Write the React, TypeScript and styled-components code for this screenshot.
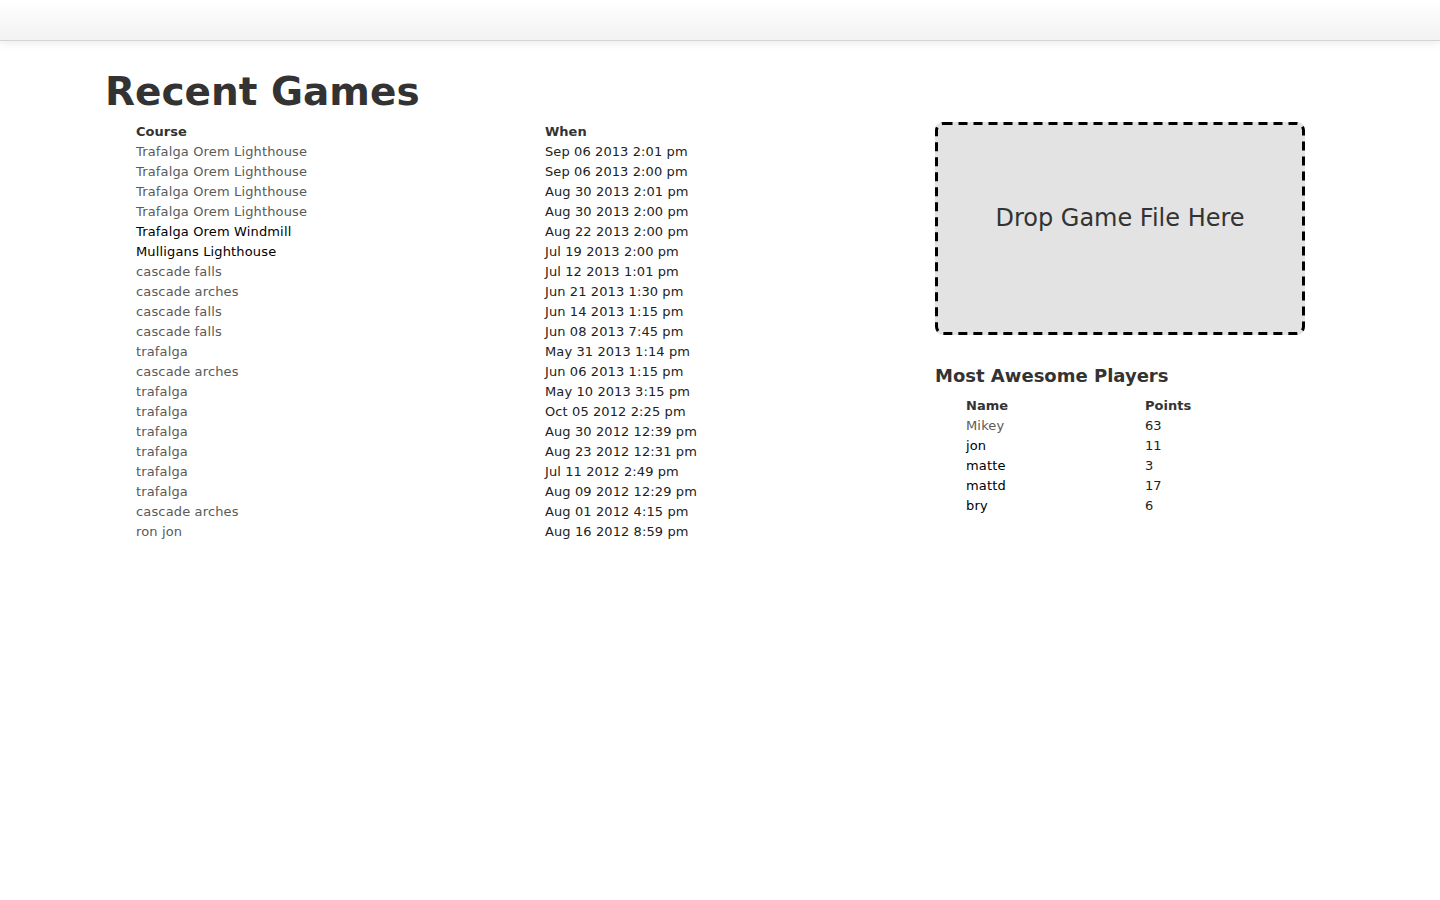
import { ReactElement } from 'react';
import styled, { createGlobalStyle } from 'styled-components';

const GlobalStyle = createGlobalStyle`
  html, body {
    margin: 0;
    padding: 0;
    background: #fff;
  }
  body {
    font-family: "DejaVu Sans", Verdana, sans-serif;
    font-size: 13px;
    line-height: 20px;
    color: #333;
  }
`;

const NavBar = styled.div`
  height: 40px;
  background: linear-gradient(to bottom, #ffffff, #f2f2f2);
  border-bottom: 1px solid #d4d4d4;
  box-shadow: 0 1px 10px rgba(0, 0, 0, 0.1);
`;

const Page = styled.div`
  width: 1170px;
  margin: 0 auto;
`;

const Title = styled.h1`
  margin: 29px 0 8px -30px;
  font-size: 39px;
  line-height: 44px;
  font-weight: bold;
  color: #333;
`;

const Row = styled.div`
  display: grid;
  grid-template-columns: 770px 370px;
  column-gap: 30px;
  align-items: start;
`;

const Table = styled.table<{ $width: number; $indent?: number }>`
  border-collapse: collapse;
  border-spacing: 0;
  width: ${p => p.$width}px;
  margin-left: ${p => p.$indent || 0}px;
`;

const Head = styled.th<{ $width?: string }>`
  text-align: left;
  font-weight: bold;
  color: #333;
  padding: 0 0 0 1px;
  line-height: 20px;
  width: ${p => p.$width || 'auto'};
`;

const Cell = styled.td`
  padding: 0 0 0 1px;
  line-height: 20px;
  color: #222;
  letter-spacing: 0.1px;
`;

const Link = styled.a<{ $seen?: boolean }>`
  color: ${p => (p.$seen ? '#5a5a5a' : '#000')};
  text-decoration: none;
  letter-spacing: 0.15px;
`;

const DropZone = styled.div`
  position: relative;
  box-sizing: border-box;
  height: 213px;
  border-radius: 8px;
  background: #e3e3e3;
  display: flex;
  justify-content: center;
  padding-top: 81px;
  font-size: 24px;
  line-height: 30px;
  color: #333;
`;

const DashedEdge = styled.svg`
  position: absolute;
  inset: 0;
  width: 100%;
  height: 100%;
  pointer-events: none;
`;

const SubTitle = styled.h3`
  margin: 29px 0 8px;
  font-size: 18px;
  line-height: 24px;
  font-weight: bold;
  color: #333;
`;

const games = [
  ['Trafalga Orem Lighthouse', 'Sep 06 2013 2:01 pm', true],
  ['Trafalga Orem Lighthouse', 'Sep 06 2013 2:00 pm', true],
  ['Trafalga Orem Lighthouse', 'Aug 30 2013 2:01 pm', true],
  ['Trafalga Orem Lighthouse', 'Aug 30 2013 2:00 pm', true],
  ['Trafalga Orem Windmill', 'Aug 22 2013 2:00 pm', false],
  ['Mulligans Lighthouse', 'Jul 19 2013 2:00 pm', false],
  ['cascade falls', 'Jul 12 2013 1:01 pm', true],
  ['cascade arches', 'Jun 21 2013 1:30 pm', true],
  ['cascade falls', 'Jun 14 2013 1:15 pm', true],
  ['cascade falls', 'Jun 08 2013 7:45 pm', true],
  ['trafalga', 'May 31 2013 1:14 pm', true],
  ['cascade arches', 'Jun 06 2013 1:15 pm', true],
  ['trafalga', 'May 10 2013 3:15 pm', true],
  ['trafalga', 'Oct 05 2012 2:25 pm', true],
  ['trafalga', 'Aug 30 2012 12:39 pm', true],
  ['trafalga', 'Aug 23 2012 12:31 pm', true],
  ['trafalga', 'Jul 11 2012 2:49 pm', true],
  ['trafalga', 'Aug 09 2012 12:29 pm', true],
  ['cascade arches', 'Aug 01 2012 4:15 pm', true],
  ['ron jon', 'Aug 16 2012 8:59 pm', true],
] as const;

const players = [
  ['Mikey', '63', true],
  ['jon', '11', false],
  ['matte', '3', false],
  ['mattd', '17', false],
  ['bry', '6', false],
] as const;

function App(): ReactElement {
  return (
    <>
      <GlobalStyle />
      <NavBar />
      <Page>
        <Title>Recent Games</Title>
        <Row>
          <Table $width={770}>
            <thead>
              <tr>
                <Head $width="408px">Course</Head>
                <Head>When</Head>
              </tr>
            </thead>
            <tbody>
              {games.map(([course, when, seen], i) => (
                <tr key={i}>
                  <Cell>
                    <Link href="#" $seen={seen}>{course}</Link>
                  </Cell>
                  <Cell>{when}</Cell>
                </tr>
              ))}
            </tbody>
          </Table>
          <div>
            <DropZone>
              <DashedEdge>
                <rect
                  x="1.5"
                  y="1.5"
                  width="367"
                  height="210"
                  rx="7"
                  fill="none"
                  stroke="#000"
                  strokeWidth="3"
                  strokeDasharray="9 6"
                />
              </DashedEdge>
              Drop Game File Here
            </DropZone>
            <SubTitle>Most Awesome Players</SubTitle>
            <Table $width={340} $indent={30}>
              <thead>
                <tr>
                  <Head $width="178px">Name</Head>
                  <Head>Points</Head>
                </tr>
              </thead>
              <tbody>
                {players.map(([name, points, seen]) => (
                  <tr key={name}>
                    <Cell>
                      <Link href="#" $seen={seen}>{name}</Link>
                    </Cell>
                    <Cell>{points}</Cell>
                  </tr>
                ))}
              </tbody>
            </Table>
          </div>
        </Row>
      </Page>
    </>
  );
}

export default App;
